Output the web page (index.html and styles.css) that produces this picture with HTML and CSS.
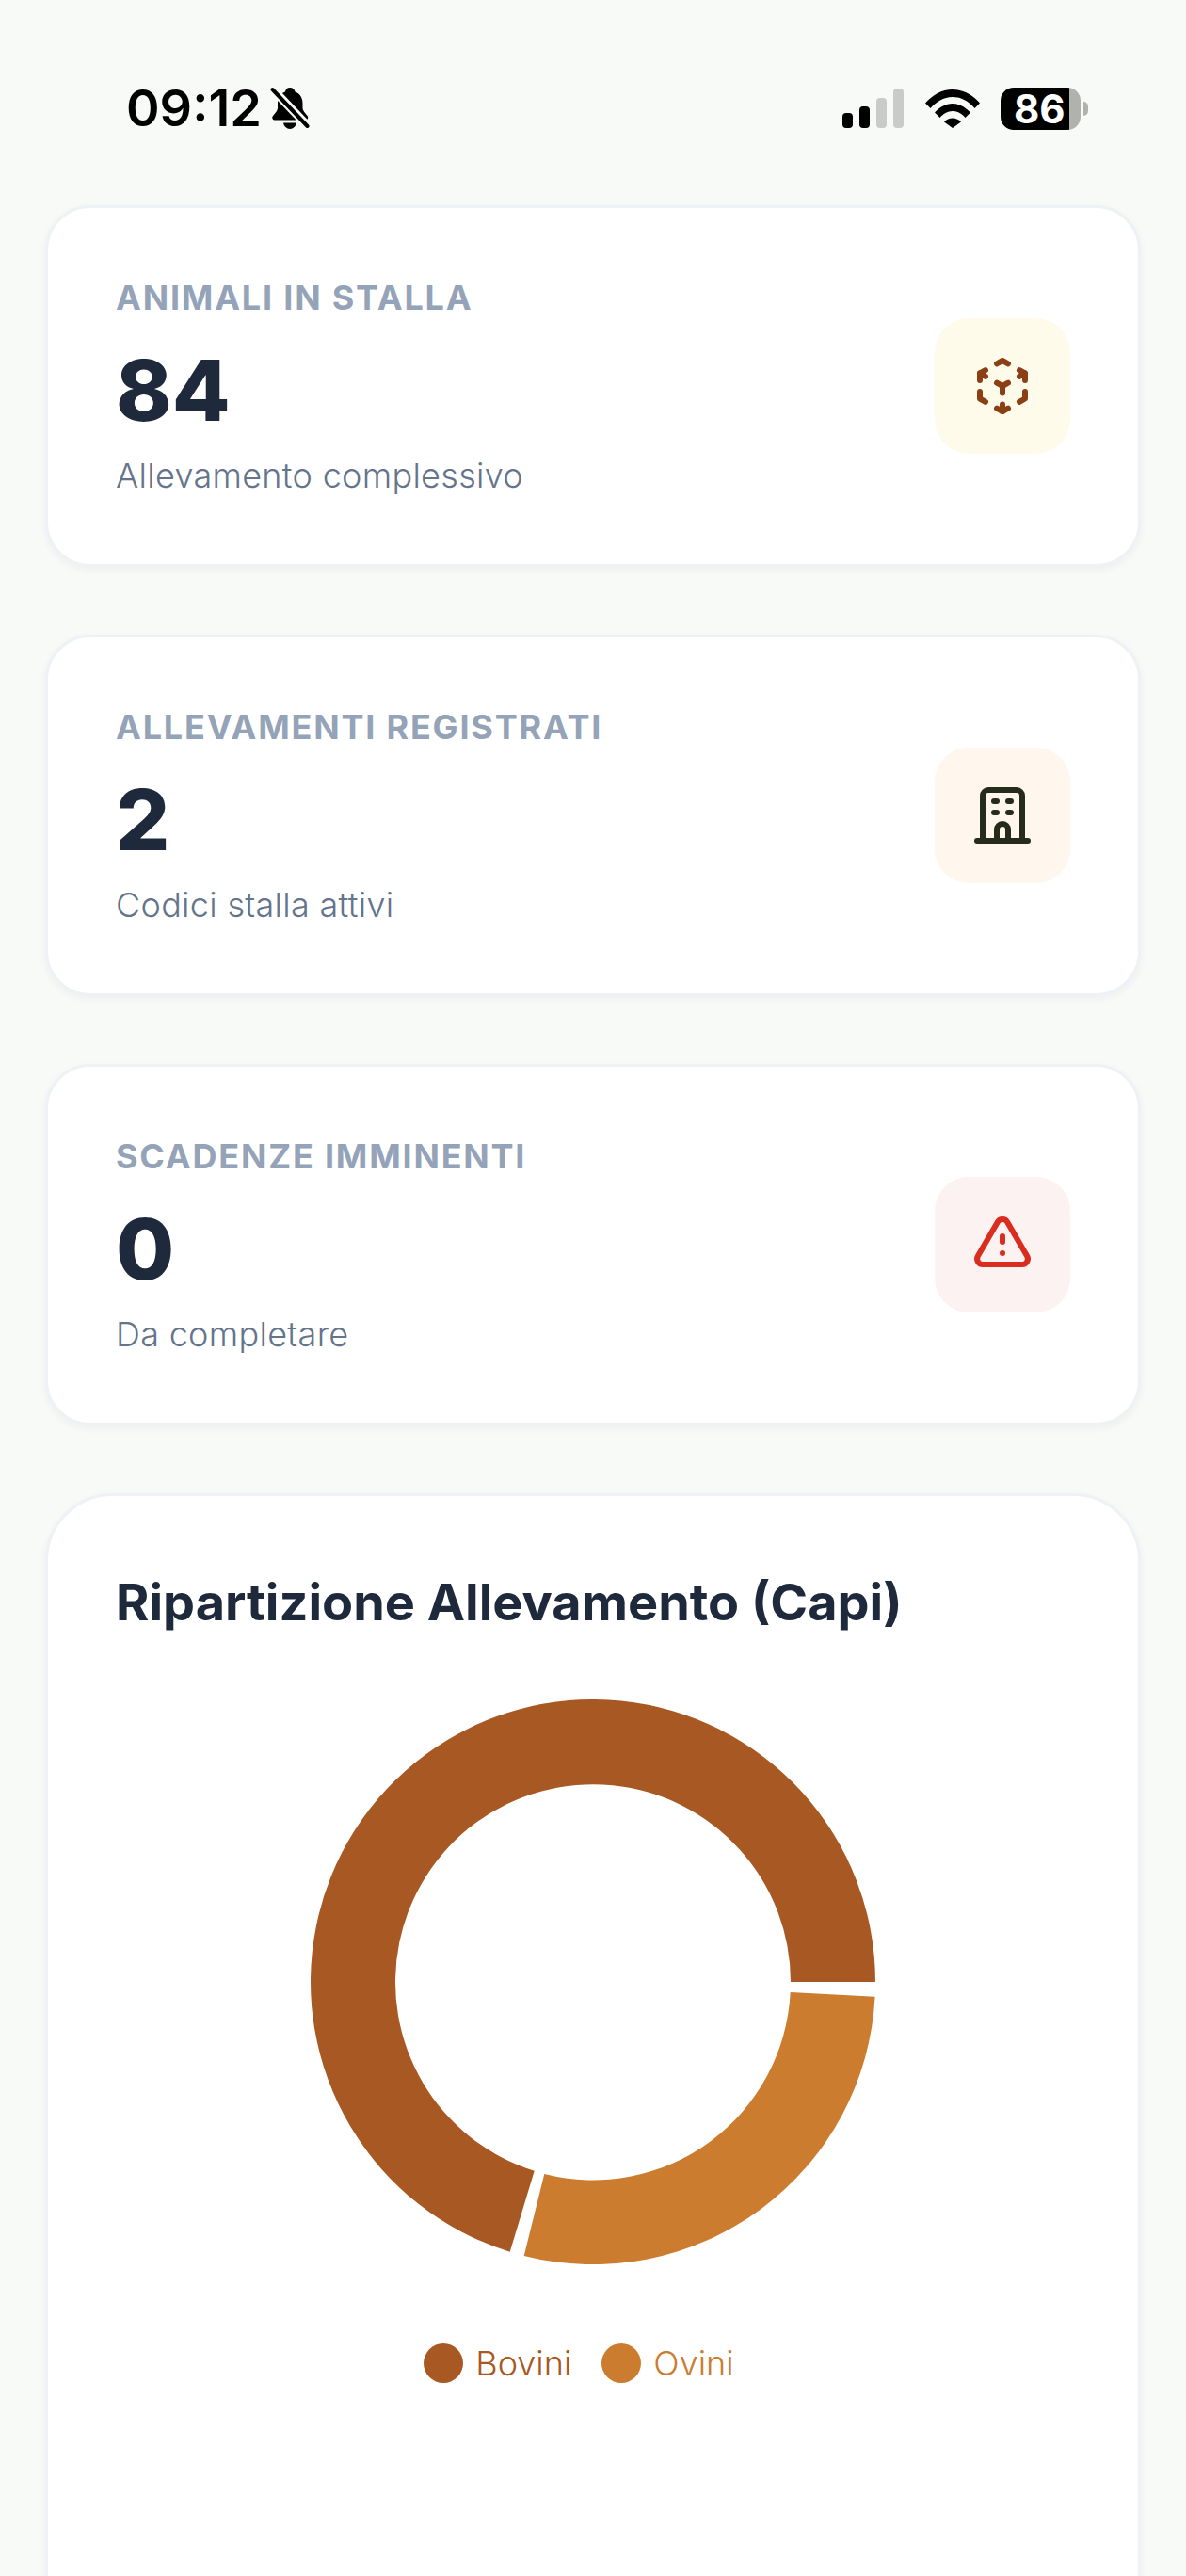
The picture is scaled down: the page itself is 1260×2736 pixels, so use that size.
FILE: index.html
```html
<!DOCTYPE html>
<html lang="it">
<head>
<meta charset="UTF-8">
<meta name="viewport" content="width=device-width, initial-scale=1.0">
<title>Dashboard allevamento</title>
<link rel="stylesheet" href="styles.css">
</head>
<body>
<div class="status-bar">
  <div class="status-left">
    <span class="clock">09:12</span>
    <svg class="bell" viewBox="0 0 42 46">
      <path d="M21 1c3 0 5 2 5.500 4.500 5 1.800 8 6.200 8 12v5c0 3 2 5 5 8.500 1.500 2 .5 4.500-2 4.500H5c-2.500 0-3.500-2.500-2-4.500 3-3.500 5-5.500 5-8.500v-5c0-5.800 3-10.200 8-12C16.500 3 18 1 21 1z"/>
      <path d="M14 38.500h14c-.5 3.500-3.500 6.500-7 6.500s-6.500-3-7-6.500z"/>
      <path class="bell-cut" d="M2 2l38 40"/>
      <path class="bell-slash" d="M2.500 3l37 39"/>
    </svg>
  </div>
  <div class="status-right">
    <div class="signal">
      <span class="bar bar-1"></span>
      <span class="bar bar-2"></span>
      <span class="bar bar-3"></span>
      <span class="bar bar-4"></span>
    </div>
    <svg class="wifi" viewBox="0 0 58 42">
      <path d="M0 15.500C7.500 7 17.500 1 29 1s21.500 6 29 14.500l-5.500 5.500C46.500 14 38.500 9 29 9S11.500 14 5.500 21z"/>
      <path d="M10 25.500C15 20 21.500 16 29 16s14 4 19 9.500l-5.500 5.500C39 27 34.500 24 29 24s-10 3-13.500 7z"/>
      <path d="M20 35.500c2.500-2.500 5.500-4 9-4s6.500 1.500 9 4L29 42z"/>
    </svg>
    <div class="battery">
      <div class="battery-body">86</div>
      <span class="battery-tip"></span>
    </div>
  </div>
</div>

<div class="content">
  <div class="stat-card">
    <div class="stat-text">
      <div class="stat-label">ANIMALI IN STALLA</div>
      <div class="stat-value">84</div>
      <div class="stat-note">Allevamento complessivo</div>
    </div>
    <div class="stat-icon icon-amber">
      <svg viewBox="0 0 24 24">
        <path d="M6 17.600l-2-1.100v-2.500"/>
        <path d="M4 10V7.500l2-1.100"/>
        <path d="M10 4.100l2-1.100 2 1.100"/>
        <path d="M18 6.400l2 1.100V10"/>
        <path d="M20 14v2.500l-2 1.120"/>
        <path d="M14 19.900L12 21l-2-1.100"/>
        <path d="M12 12l2-1.100"/>
        <path d="M18 8.600l2-1.100"/>
        <path d="M12 12v2.500"/>
        <path d="M12 18.500V21"/>
        <path d="M12 12l-2-1.120"/>
        <path d="M6 8.600L4 7.500"/>
      </svg>
    </div>
  </div>

  <div class="stat-card">
    <div class="stat-text">
      <div class="stat-label">ALLEVAMENTI REGISTRATI</div>
      <div class="stat-value">2</div>
      <div class="stat-note">Codici stalla attivi</div>
    </div>
    <div class="stat-icon icon-orange">
      <svg viewBox="0 0 24 24">
        <path d="M3 21h18"/>
        <path d="M9 7h1"/>
        <path d="M14 7h1"/>
        <path d="M9 11h1"/>
        <path d="M14 11h1"/>
        <path d="M5 21V5a2 2 0 0 1 2-2h10a2 2 0 0 1 2 2v16"/>
        <path d="M10 21v-4a2 2 0 0 1 4 0v4"/>
      </svg>
    </div>
  </div>

  <div class="stat-card">
    <div class="stat-text">
      <div class="stat-label">SCADENZE IMMINENTI</div>
      <div class="stat-value">0</div>
      <div class="stat-note">Da completare</div>
    </div>
    <div class="stat-icon icon-red">
      <svg viewBox="0 0 24 24">
        <path d="M12 9v2"/>
        <path d="M10.270 4L3.300 16a2 2 0 0 0 1.730 3h13.940a2 2 0 0 0 1.730-3L13.730 4a2 2 0 0 0-3.460 0z"/>
        <path d="M12 15h.01"/>
      </svg>
    </div>
  </div>

  <div class="chart-card">
    <h2 class="chart-title">Ripartizione Allevamento (Capi)</h2>
    <svg class="donut" viewBox="0 0 600 600">
      <path class="slice-bovini" d="M600 300A300 300 0 1 0 211.700 586.700L237.700 500.700A210 210 0 1 1 510 300Z"/>
      <path class="slice-ovini" d="M599.600 315.700A300 300 0 0 1 226.700 591L248.300 504A210 210 0 0 0 509.700 311Z"/>
    </svg>
    <div class="legend">
      <div class="legend-item bovini"><span class="dot"></span>Bovini</div>
      <div class="legend-item ovini"><span class="dot"></span>Ovini</div>
    </div>
  </div>
</div>
</body>
</html>
```

FILE: styles.css
```css
html, body {
  margin: 0;
  height: 2736px;
  overflow: hidden;
}
body {
  font-family: Inter, "Noto Sans", sans-serif;
  background-color: #f8faf8;
}
.status-bar {
  height: 218px;
  box-sizing: border-box;
  padding: 92px 104px 0 134px;
  display: flex;
  justify-content: space-between;
  align-items: flex-start;
}
.status-left {
  display: flex;
  align-items: center;
  gap: 9px;
  height: 46px;
}
.clock {
  font-size: 54px;
  font-weight: 600;
  line-height: 46px;
  color: #000;
}
.bell {
  width: 42px;
  height: 46px;
}
.bell-cut {
  fill: none;
  stroke: #f8faf8;
  stroke-width: 9;
}
.bell-slash {
  fill: none;
  stroke: #000;
  stroke-width: 4;
  stroke-linecap: round;
}
.status-right {
  display: flex;
  align-items: center;
  height: 46px;
}
.signal {
  display: flex;
  align-items: flex-end;
  gap: 7px;
  height: 42px;
  margin-right: 23px;
}
.bar {
  width: 11px;
  border-radius: 4px;
  background-color: #000;
}
.bar-1 { height: 16px; }
.bar-2 { height: 23px; }
.bar-3 { height: 32px; background-color: #c8cbc8; }
.bar-4 { height: 42px; background-color: #c8cbc8; }
.wifi {
  width: 58px;
  height: 42px;
  margin-right: 22px;
}
.battery {
  display: flex;
  align-items: center;
  gap: 3px;
}
.battery-body {
  width: 85px;
  height: 45px;
  box-sizing: border-box;
  padding-left: 14px;
  border-radius: 14px;
  background: linear-gradient(to right, #000 73px, #b0b2ae 73px);
  color: #fff;
  font-size: 42px;
  font-weight: 700;
  line-height: 45px;
}
.battery-tip {
  width: 5px;
  height: 15px;
  border-radius: 0 8px 8px 0;
  background-color: #b0b2ae;
}
.content {
  display: flex;
  flex-direction: column;
  gap: 72px;
  padding: 0 48px;
}
.stat-card {
  height: 384px;
  box-sizing: border-box;
  padding: 0 72px;
  display: flex;
  justify-content: space-between;
  align-items: center;
  background-color: #fff;
  border: 3px solid #eef1f6;
  border-radius: 48px;
  box-shadow: 0 3px 9px rgba(30, 41, 59, 0.05);
}
.stat-text {
  padding-top: 1px;
}
.stat-label {
  font-size: 36px;
  font-weight: 700;
  line-height: 54px;
  letter-spacing: 1.800px;
  color: #94a3b8;
}
.stat-value {
  margin: 18px 0 9px;
  font-size: 90px;
  font-weight: 800;
  line-height: 108px;
  color: #1e293b;
}
.stat-note {
  font-size: 36px;
  font-weight: 350;
  letter-spacing: 0.300px;
  line-height: 54px;
  color: #64748b;
}
.stat-icon {
  width: 144px;
  height: 144px;
  border-radius: 36px;
  display: flex;
  justify-content: center;
  align-items: center;
}
.stat-icon svg {
  width: 72px;
  height: 72px;
  fill: none;
  stroke-width: 2;
  stroke-linecap: round;
  stroke-linejoin: round;
}
.icon-amber { background-color: #fffbeb; }
.icon-amber svg { stroke: #8b3f14; }
.icon-orange { background-color: #fff7ee; }
.icon-orange svg { stroke: #262c1b; }
.icon-red { background-color: #fdf2f2; }
.icon-red svg { stroke: #d92d20; }
.chart-card {
  height: 1300px;
  box-sizing: border-box;
  padding: 72px;
  background-color: #fff;
  border: 3px solid #eef1f6;
  border-radius: 72px;
  box-shadow: 0 3px 9px rgba(30, 41, 59, 0.05);
}
.chart-title {
  margin: 0 0 63px;
  font-size: 54px;
  font-weight: 700;
  line-height: 81px;
  color: #1e293b;
}
.donut {
  display: block;
  width: 600px;
  height: 600px;
  margin: 0 auto;
}
.slice-bovini { fill: #a85822; }
.slice-ovini { fill: #cb7c2e; }
.legend {
  display: flex;
  justify-content: center;
  gap: 32px;
  margin-top: 84px;
  padding-right: 30px;
}
.legend-item {
  display: flex;
  align-items: center;
  gap: 13px;
  font-size: 36px;
  font-weight: 350;
  line-height: 42px;
}
.dot {
  width: 42px;
  height: 42px;
  border-radius: 50%;
}
.bovini { color: #a85822; }
.bovini .dot { background-color: #a85822; }
.ovini { color: #cb7c2e; }
.ovini .dot { background-color: #cb7c2e; }
```
